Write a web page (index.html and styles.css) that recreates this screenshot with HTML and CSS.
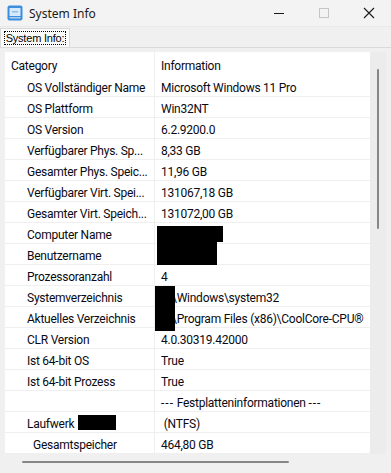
FILE: index.html
```html
<!DOCTYPE html>
<html lang="de">
<head>
  <meta charset="UTF-8" />
  <meta name="viewport" content="width=device-width, initial-scale=1" />
  <title>System Info</title>
  <link rel="stylesheet" href="styles.css">
</head>
<body>
  <div class="window">
    <div class="titlebar">
      <svg class="appicon" width="16" height="16" viewBox="0 0 16 16">
        <rect x="0.5" y="0.5" width="15" height="15" rx="2" fill="#3d8fdc"/>
        <rect x="2.5" y="3" width="11" height="8" rx="0.5" fill="#d6eafb"/>
        <rect x="5" y="6" width="6" height="1.5" fill="#8fbfe8"/>
        <rect x="2.5" y="12" width="11" height="1.5" fill="#a9d1f3"/>
      </svg>
      <span class="title">System Info</span>
      <div class="controls">
        <div class="ctl"><svg width="12" height="12" viewBox="0 0 12 12"><path d="M1 6.5h10" stroke="#1a1a1a" stroke-width="1"/></svg></div>
        <div class="ctl"><svg width="12" height="12" viewBox="0 0 12 12"><rect x="1.5" y="1.5" width="9" height="9" fill="none" stroke="#c4c4c4"/></svg></div>
        <div class="ctl"><svg width="12" height="12" viewBox="0 0 12 12"><path d="M1 1l10 10M11 1L1 11" stroke="#1a1a1a" stroke-width="1.1"/></svg></div>
      </div>
    </div>

    <div class="tabs">
      <div class="tab"><span class="focus">System Info:</span></div>
    </div>

    <div class="page">
      <div class="listview">
        <div class="view">
          <div class="row head"><div class="c1">Category</div><div class="c2">Information</div></div>
          <div class="row"><div class="c1">OS Vollständiger Name</div><div class="c2">Microsoft Windows 11 Pro</div></div>
          <div class="row"><div class="c1">OS Plattform</div><div class="c2">Win32NT</div></div>
          <div class="row"><div class="c1">OS Version</div><div class="c2">6.2.9200.0</div></div>
          <div class="row"><div class="c1">Verfügbarer Phys. Sp...</div><div class="c2">8,33 GB</div></div>
          <div class="row"><div class="c1">Gesamter Phys. Speic...</div><div class="c2">11,96 GB</div></div>
          <div class="row"><div class="c1">Verfügbarer Virt. Spei...</div><div class="c2">131067,18 GB</div></div>
          <div class="row"><div class="c1">Gesamter Virt. Speich...</div><div class="c2">131072,00 GB</div></div>
          <div class="row"><div class="c1">Computer Name</div><div class="c2"><span class="redact r-comp"></span></div></div>
          <div class="row"><div class="c1">Benutzername</div><div class="c2"><span class="redact r-user"></span></div></div>
          <div class="row"><div class="c1">Prozessoranzahl</div><div class="c2">4</div></div>
          <div class="row"><div class="c1">Systemverzeichnis</div><div class="c2 path"><span class="redact r-drive"></span>\Windows\system32</div></div>
          <div class="row"><div class="c1">Aktuelles Verzeichnis</div><div class="c2 path">\Program Files (x86)\CoolCore-CPU®</div></div>
          <div class="row"><div class="c1">CLR Version</div><div class="c2">4.0.30319.42000</div></div>
          <div class="row"><div class="c1">Ist 64-bit OS</div><div class="c2">True</div></div>
          <div class="row"><div class="c1">Ist 64-bit Prozess</div><div class="c2">True</div></div>
          <div class="row"><div class="c1"></div><div class="c2"><span class="dashes">---</span>&nbsp;Festplatteninformationen&nbsp;<span class="dashes">---</span></div></div>
          <div class="row"><div class="c1">Laufwerk <span class="redact-inline"></span></div><div class="c2 pre"> (NTFS)</div></div>
          <div class="row"><div class="c1 sub">Gesamtspeicher</div><div class="c2">464,80 GB</div></div>
        </div>
        <div class="vscroll"><div class="vthumb"></div></div>
        <div class="hscroll"><div class="hthumb"></div></div>
        <div class="corner"></div>
      </div>
    </div>
  </div>
</body>
</html>
```

FILE: styles.css
```css
body {
  margin: 0;
  background: #f0f0f0;
}
.window {
  width: 391px;
  height: 473px;
  display: flex;
  flex-direction: column;
  background: #f0f0f0;
  overflow: hidden;
}
.titlebar {
  height: 28px;
  display: flex;
  align-items: center;
  background: #f3f3f3;
  border-bottom: 1px solid #e9e9e9;
  box-sizing: border-box;
}
.appicon {
  margin-left: 7px;
  margin-right: 6px;
}
.title {
  font-family: "Noto Sans", "Open Sans", sans-serif;
  font-size: 12px;
  color: #1b1b1b;
}
.controls {
  margin-left: auto;
  display: flex;
  height: 100%;
}
.ctl {
  width: 45px;
  display: flex;
  align-items: center;
  justify-content: center;
}
.tabs {
  height: 20px;
  display: flex;
  align-items: flex-end;
  border-bottom: 1px solid #dadada;
}
.tab {
  height: 19px;
  width: 70px;
  box-sizing: border-box;
  background: #fbfbfb;
  border: 1px solid #d9d9d9;
  border-bottom: none;
  display: flex;
  align-items: center;
  justify-content: center;
  font-family: "Liberation Sans", Arial, sans-serif;
  font-size: 11px;
  letter-spacing: -0.2px;
  color: #000;
}
.focus {
  border: 1px dotted #000;
  padding: 0 1px;
  line-height: 12px;
}
.page {
  flex: 1;
  padding: 4px 5px 3px 5px;
  background: #f0f0f0;
}
.listview {
  height: 100%;
  display: grid;
  grid-template-columns: 1fr 16px;
  grid-template-rows: 1fr 16px;
}
.view {
  background: #fff;
  overflow: hidden;
  font-family: Roboto, "Noto Sans", sans-serif;
  font-size: 12px;
  letter-spacing: -0.25px;
  color: #0a0a14;
  border-radius: 0 0 4px 0;
}
.row {
  display: flex;
  height: 21px;
  border-bottom: 1px solid #efefef;
  box-sizing: border-box;
  white-space: nowrap;
}
.row.head {
  height: 24px;
  border-bottom: none;
}
.c1 {
  width: 150px;
  flex: none;
  display: flex;
  align-items: center;
  padding: 3px 0 0 22px;
  box-sizing: border-box;
  border-right: 1px solid #efefef;
}
.head .c1 {
  padding-left: 6px;
}
.c1.sub {
  padding-left: 28px;
}
.c2 {
  display: flex;
  align-items: center;
  padding: 3px 0 0 6px;
  position: relative;
}
.c2.path {
  padding-left: 17px;
}
.c2.pre {
  white-space: pre;
}
.dashes {
  letter-spacing: 1px;
}
.redact {
  position: absolute;
  background: #000;
  z-index: 1;
}
.r-comp {
  left: 2px;
  top: 3px;
  width: 66px;
  height: 16px;
}
.r-user {
  left: 2px;
  top: -2px;
  width: 60px;
  height: 23px;
}
.r-drive {
  left: 0;
  top: 0;
  width: 20px;
  height: 45px;
}
.redact-inline {
  display: inline-block;
  width: 38px;
  height: 15px;
  background: #000;
  margin-left: 4px;
  position: relative;
  top: -1px;
}
.vscroll {
  background: #ececec;
  display: flex;
  justify-content: center;
  padding-top: 17px;
}
.vthumb {
  width: 2px;
  height: 160px;
  background: #878787;
  border-radius: 1px;
}
.hscroll {
  background: #f0f0f0;
  display: flex;
  align-items: center;
  padding-left: 17px;
}
.hthumb {
  height: 2px;
  width: 267px;
  background: #878787;
  border-radius: 1px;
}
.corner {
  background: #f0f0f0;
}
```
